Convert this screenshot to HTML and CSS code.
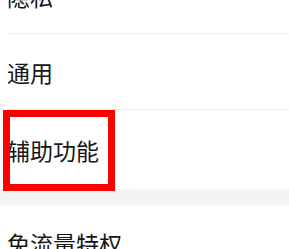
FILE: index.html
```html
<html>
<head>
  <title>设置</title>
  <link rel="stylesheet" href="styles.css">
</head>
<body>
  <div class="settings">
    <div class="group">
      <div class="row">隐私</div>
      <div class="row">通用</div>
      <div class="row last">
        辅助功能
        <div class="highlight"></div>
      </div>
    </div>
    <div class="gap"></div>
    <div class="group">
      <div class="row">免流量特权</div>
    </div>
  </div>
</body>
</html>
```

FILE: styles.css
```css
body {
  margin: 0;
  background-color: #ffffff;
  font-family: "Noto Sans CJK SC", "Noto Sans", sans-serif;
  overflow: hidden;
}

.settings {
  margin-top: -42px;
}

.group {
  background-color: #ffffff;
}

.row {
  position: relative;
  display: flex;
  align-items: center;
  height: 75px;
  margin-left: 7px;
  font-size: 23px;
  color: #161616;
  border-bottom: 1px solid #ededed;
}

.row.last {
  height: 79px;
  border-bottom: none;
}

.highlight {
  position: absolute;
  left: -4px;
  top: 0;
  width: 112px;
  height: 81px;
  box-sizing: border-box;
  border: 7px solid #ff0000;
}

.gap {
  height: 16px;
  background-color: #f4f4f6;
}
```
